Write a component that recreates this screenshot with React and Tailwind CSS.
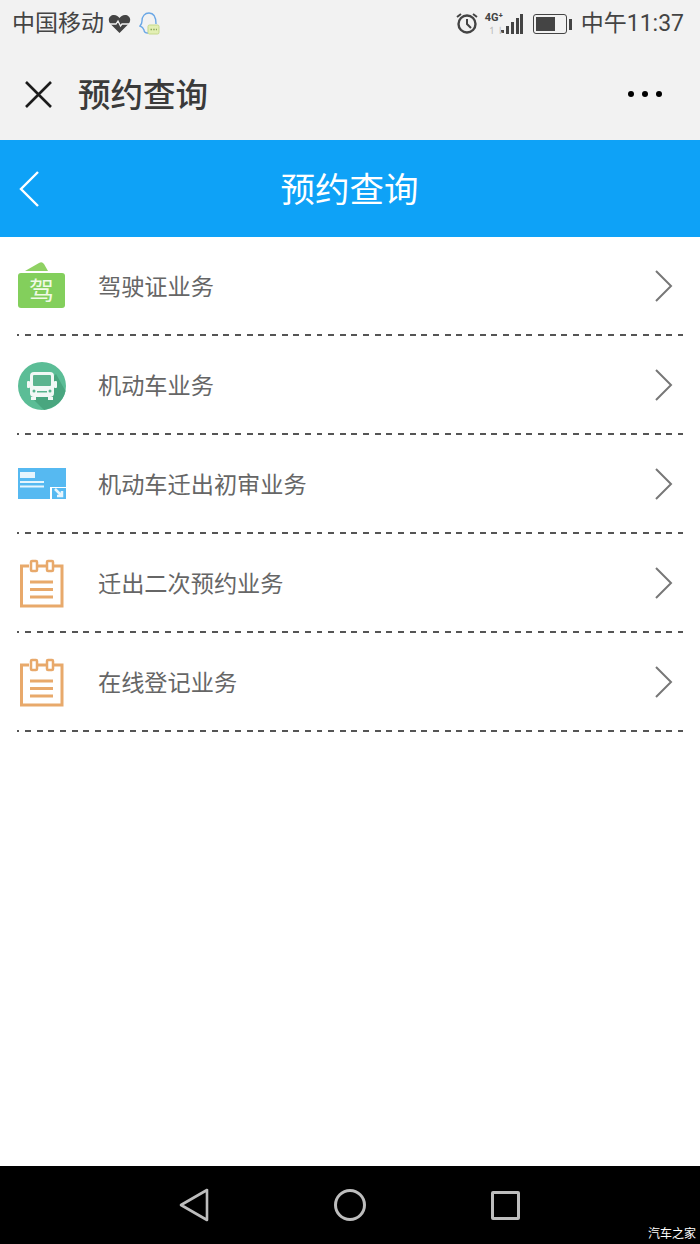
const cjk = "font-['Roboto','Noto_Sans_CJK_SC',sans-serif]";

function DriverIcon() {
    return (
        <svg width="48" height="48" viewBox="0 0 48 48" fill="none">
            <path d="M8 9 L22 1 Q25 -1 27 2 L31 9 Z" fill="#8fd163" />
            <rect x="1" y="11" width="47" height="35" rx="3" fill="#83cf5c" />
            <text x="24.5" y="38" textAnchor="middle" fontSize="25" fill="#f0fae6" fontFamily="Noto Sans CJK SC">驾</text>
        </svg>
    );
}

function BusIcon() {
    return (
        <svg className="mt-[2px]" width="50" height="50" viewBox="0 0 50 50" fill="none">
            <circle cx="25" cy="25" r="24" fill="#5bbd96" />
            <path d="M39 13 L48.5 30 Q45 45 27 49 L15 37 Z" fill="#49a67f" />
            <rect x="13" y="11" width="24" height="25" rx="4" fill="#f2f8f5" />
            <rect x="16" y="14" width="18" height="11" rx="1" fill="#5bb48e" />
            <rect x="10" y="20" width="3" height="7" rx="1" fill="#f2f8f5" />
            <rect x="37" y="20" width="3" height="7" rx="1" fill="#f2f8f5" />
            <rect x="14" y="36" width="5" height="3" fill="#f2f8f5" />
            <rect x="31" y="36" width="5" height="3" fill="#f2f8f5" />
            <rect x="20" y="30" width="10" height="1.5" fill="#5bb48e" />
            <circle cx="17" cy="30" r="1.5" fill="#5bb48e" />
            <circle cx="33" cy="30" r="1.5" fill="#5bb48e" />
        </svg>
    );
}

function TransferIcon() {
    return (
        <svg width="50" height="34" viewBox="0 0 50 34" fill="none">
            <path d="M1 1 H49 V20 H33 V32 H1 Z" fill="#56b9f1" />
            <rect x="35" y="21" width="14" height="11" fill="#56b9f1" />
            <rect x="3" y="5" width="15" height="6" fill="#e6f5fd" />
            <rect x="3" y="14" width="24" height="2" fill="#e6f5fd" />
            <rect x="3" y="18.5" width="24" height="2" fill="#e6f5fd" />
            <path d="M38 22 L45 29 M45 24 V29 H40" stroke="#e6f5fd" strokeWidth="2.5" />
        </svg>
    );
}

function NoteIcon() {
    return (
        <svg className="ml-[3px]" width="44" height="50" viewBox="0 0 44 50" fill="none" stroke="#e8a96b" strokeWidth="3">
            <path d="M9 8 H1.5 V48 H42 V8 H34 M18 8 H26" />
            <rect x="11" y="3" width="6" height="10" rx="1" strokeWidth="2.5" />
            <rect x="27" y="3" width="6" height="10" rx="1" strokeWidth="2.5" />
            <path d="M10 24 H33 M10 31.5 H33 M10 39 H33" />
        </svg>
    );
}

const rows = [
    { label: '驾驶证业务', icon: <DriverIcon /> },
    { label: '机动车业务', icon: <BusIcon /> },
    { label: '机动车迁出初审业务', icon: <TransferIcon /> },
    { label: '迁出二次预约业务', icon: <NoteIcon /> },
    { label: '在线登记业务', icon: <NoteIcon /> },
];

function StatusBar() {
    return (
        <div className="flex h-12 items-center justify-between pl-[12px] pr-[16px] text-[23px] text-[#444]">
            <div className="flex items-center">
                <span>中国移动</span>
                <svg className="ml-1" width="23" height="20" viewBox="0 0 23 20">
                    <path d="M11.5 19 L2 9.5 C-1 5 2 1 6 1 C8.5 1 10.5 2.5 11.5 4 C12.5 2.5 14.5 1 17 1 C21 1 24 5 21 9.5 Z" fill="#444" />
                    <path d="M1 10 H8 L10 7 L12.5 12 L14 10 H22" stroke="#f2f2f2" strokeWidth="1.3" fill="none" />
                </svg>
                <svg className="ml-[8px]" width="22" height="24" viewBox="0 0 22 24" fill="none">
                    <path d="M9 21 Q5 21 5 18 Q4 15 1 14 Q3 12 3 9 C3 4 6 1 10 1 C14 1 17 4 17 12" stroke="#6aa7e6" strokeWidth="1.4" />
                    <rect x="9" y="13" width="11" height="9" rx="1.5" fill="#e3efb4" stroke="#c5d98a" />
                    <path d="M11.5 17.5 H18" stroke="#8aa85a" strokeWidth="1.3" strokeDasharray="1.5 1.2" />
                </svg>
            </div>
            <div className="flex items-center">
                <svg width="24" height="24" viewBox="0 0 24 24" fill="none" stroke="#444">
                    <circle cx="12" cy="12" r="8.5" strokeWidth="2.4" />
                    <path d="M12 7 V12 L16 16" strokeWidth="2" />
                    <path d="M2 5 L6 2 M22 5 L18 2" strokeWidth="2" />
                </svg>
                <div className="relative ml-[4px] h-6 w-[36px]">
                    <span className="absolute left-[2px] top-0 text-[11px] font-bold leading-[12px]">4G⁺</span>
                    <span className="absolute bottom-0 left-[5px] text-[10px] leading-[10px] text-[#bbb]">↿⇂</span>
                </div>
                <svg className="-ml-[18px]" width="22" height="22" viewBox="0 0 22 22" fill="#444">
                    <rect x="0" y="17" width="3" height="3" />
                    <rect x="5" y="13" width="3" height="8" />
                    <rect x="10" y="9" width="3" height="12" />
                    <rect x="15" y="5" width="3" height="16" />
                    <rect x="19" y="1" width="3" height="20" />
                </svg>
                <div className="ml-[10px] flex items-center">
                    <div className="flex h-[20px] w-[34px] rounded-[3px] border border-[#444] p-[2px]">
                        <div className="w-[19px] bg-[#444]" />
                    </div>
                    <div className="ml-[2px] h-[11px] w-[3px] bg-[#444]" />
                </div>
                <span className="ml-[9px]">中午11:37</span>
            </div>
        </div>
    );
}

export default function App() {
    return (
        <div className={`flex h-[1244px] w-[700px] flex-col overflow-hidden bg-white ${cjk}`}>
            {/* system + webview header */}
            <div className="h-[140px] bg-[#f2f2f2]">
                <StatusBar />
                <div className="flex h-[92px] items-center justify-between pl-6 pr-[38px]">
                    <div className="flex items-center">
                        <svg width="29" height="29" viewBox="0 0 29 29" stroke="#1c1c1c" strokeWidth="2.6">
                            <path d="M2 2 L27 27 M27 2 L2 27" />
                        </svg>
                        <span className="ml-[25px] pt-[4px] text-[32.5px] font-medium leading-none text-[#3a3a3a]">预约查询</span>
                    </div>
                    <div className="flex gap-[8px]">
                        <div className="size-[6px] rounded-full bg-black" />
                        <div className="size-[6px] rounded-full bg-black" />
                        <div className="size-[6px] rounded-full bg-black" />
                    </div>
                </div>
            </div>

            <div className="relative flex h-[97px] items-center justify-center bg-[#0ea2f7] pr-[1px]">
                <svg className="absolute left-[18px] top-[30px]" width="22" height="38" viewBox="0 0 22 38" fill="none" stroke="white" strokeWidth="2.4">
                    <path d="M20 2 L3 19 L20 36" />
                </svg>
                <span className="pt-[4px] text-[34.5px] leading-none text-white">预约查询</span>
            </div>

            {/* list */}
            <div className="flex-1 px-[17px]">
                {rows.map((row) => (
                    <div key={row.label} className="flex h-[99px] flex-col">
                        <div className="flex flex-1 items-center">
                            <div className="flex w-[81px] shrink-0 items-center">{row.icon}</div>
                            <span className="flex-1 pt-[4px] text-[23.2px] leading-none text-[#666]">{row.label}</span>
                            <svg className="mr-[10px]" width="19" height="32" viewBox="0 0 19 32" fill="none" stroke="#777" strokeWidth="2">
                                <path d="M2 1 L17 16 L2 31" />
                            </svg>
                        </div>
                        <div className="h-[2px] w-full bg-[repeating-linear-gradient(90deg,#555_0_2.33px,transparent_2.33px_8px,#555_8px_11.66px)]" />
                    </div>
                ))}
            </div>

            {/* android nav */}
            <div className="relative flex h-[78px] items-center justify-between bg-black pl-[179px] pr-[180px]">
                <svg width="30" height="34" viewBox="0 0 30 34" fill="none" stroke="#bdbdbd" strokeWidth="2.6" strokeLinejoin="round">
                    <path d="M28 2 V32 L2 17 Z" />
                </svg>
                <div className="size-[32px] rounded-full border-[3px] border-[#bdbdbd]" />
                <div className="size-[29px] rounded-[2px] border-[3px] border-[#bdbdbd]" />
                <span className="absolute bottom-[4px] right-[4px] text-[12px] leading-none text-white">汽车之家</span>
            </div>
        </div>
    );
}
